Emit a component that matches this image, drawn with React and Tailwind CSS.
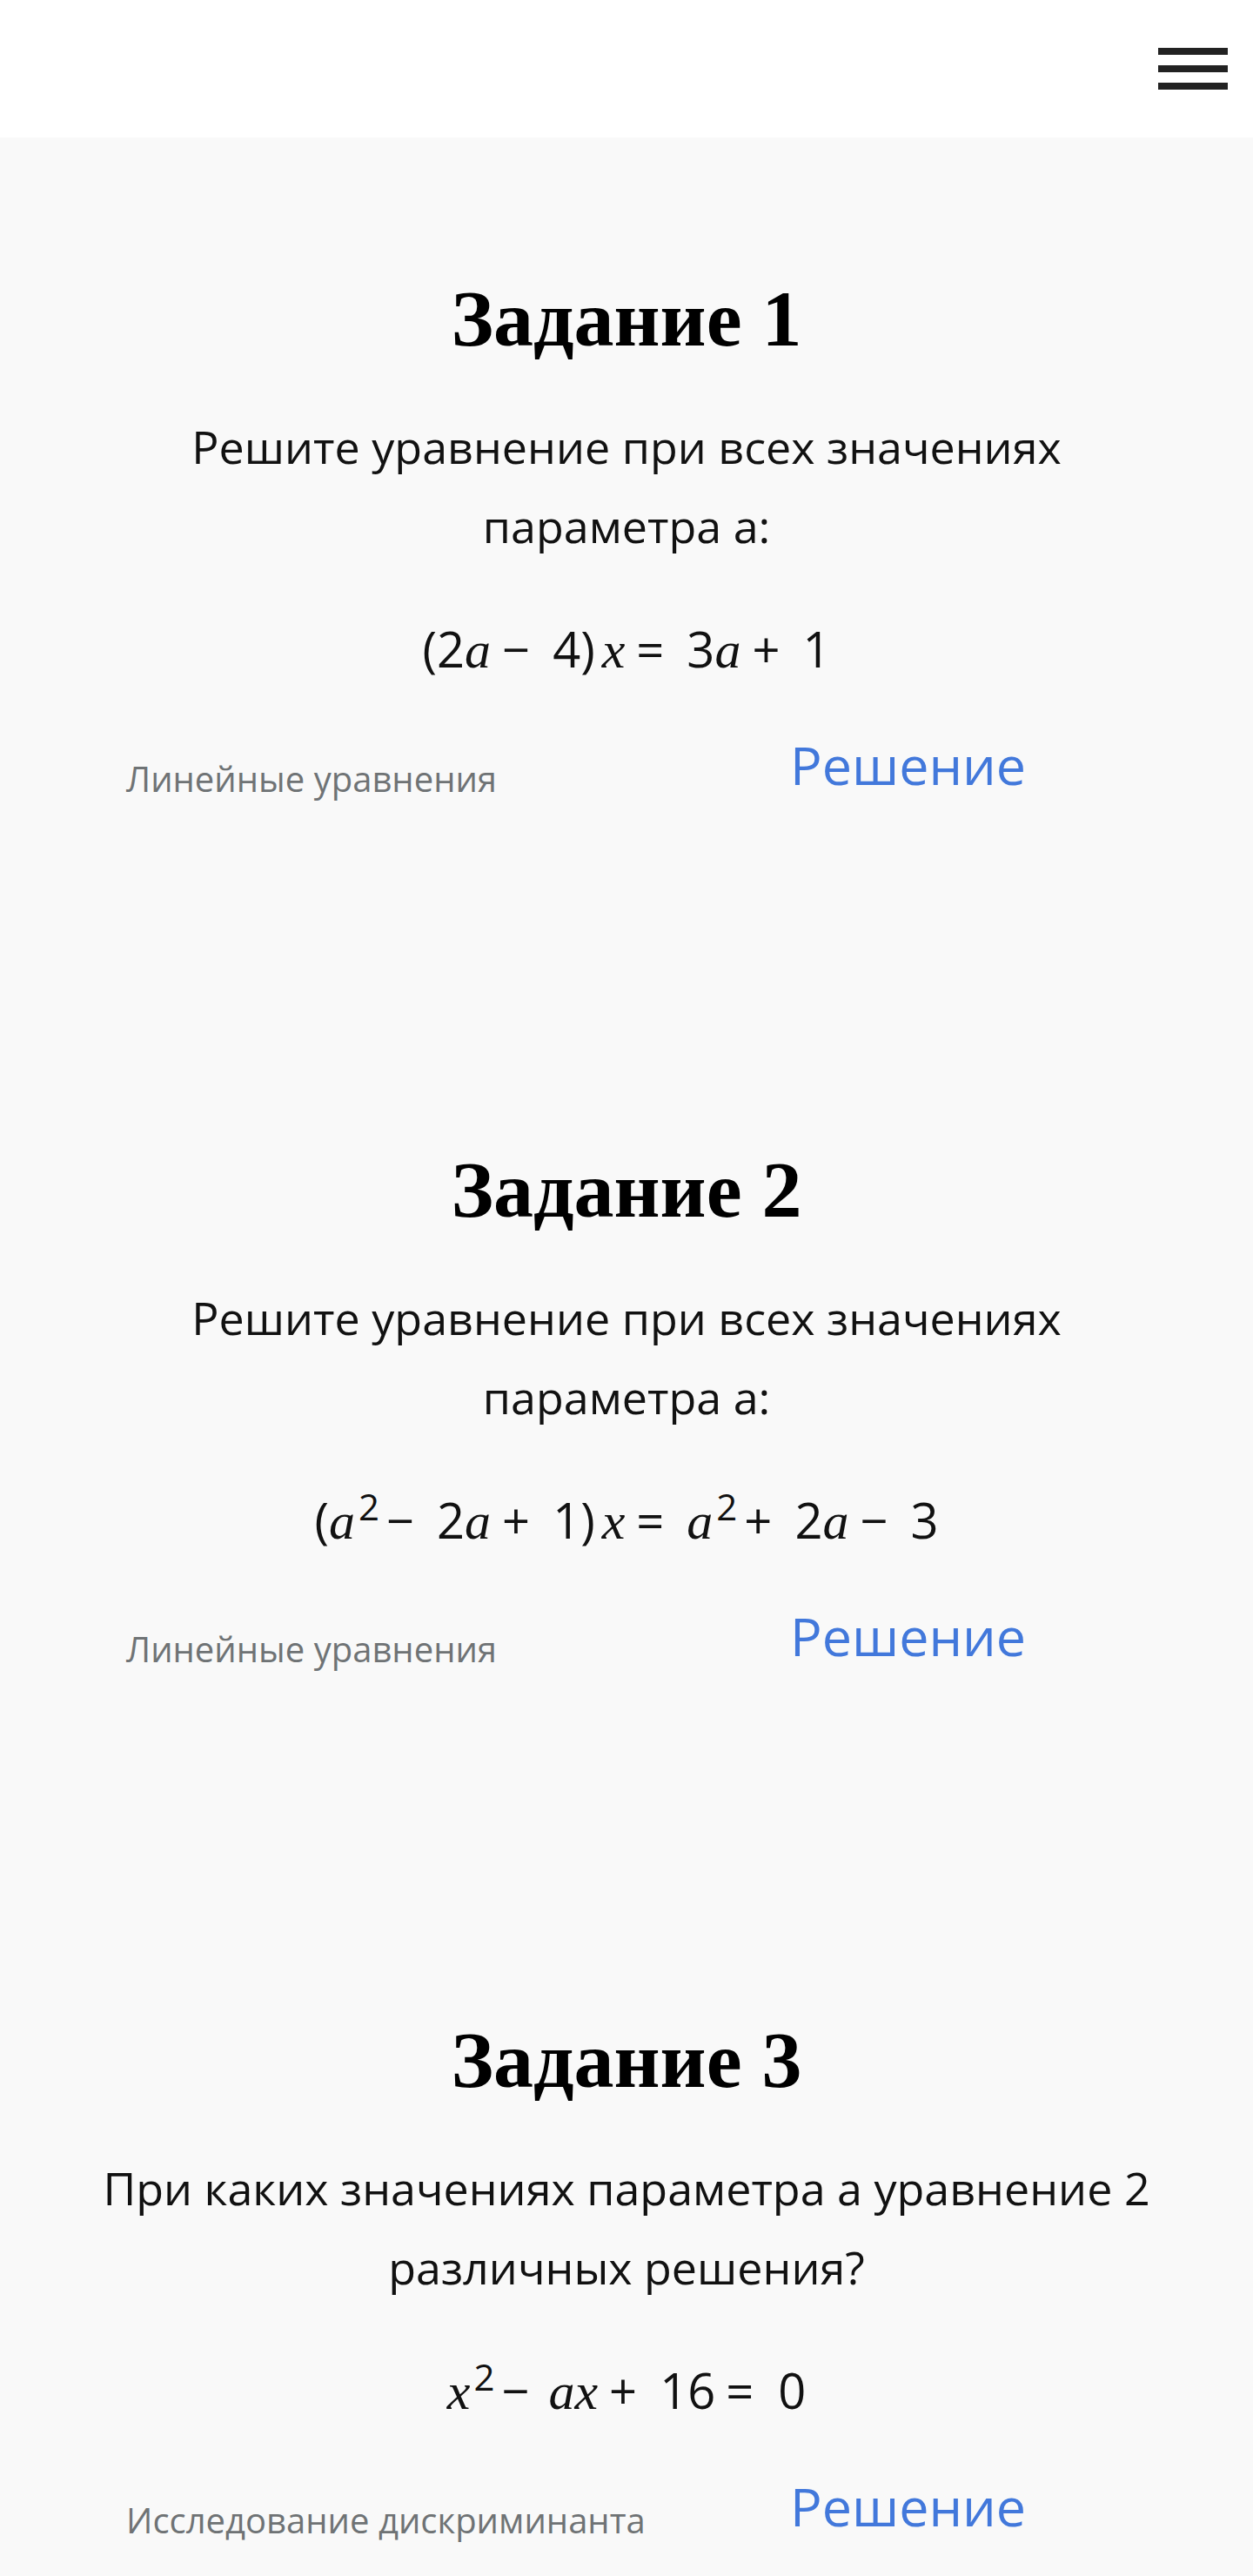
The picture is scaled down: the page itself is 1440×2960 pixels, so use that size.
import React from "react";

// variable in math italic
const V = ({ children }) => (
  <i className="font-['Liberation_Serif',serif] text-[60px] italic">{children}</i>
);

// operator with the wide space after it
const Op = ({ children }) => <span className="ml-[13px] mr-[26px]">{children}</span>;

const Eq1 = () => (
  <>
    (2<V>a</V>
    <Op>−</Op>
    4)<span className="ml-[8px]"><V>x</V></span>
    <Op>=</Op>
    3<V>a</V>
    <Op>+</Op>1
  </>
);

const Eq2 = () => (
  <>
    (<V>a</V>
    <sup className="ml-[4px]">2</sup>
    <span className="ml-[8px] mr-[26px]">−</span>
    2<V>a</V>
    <Op>+</Op>
    1)<span className="ml-[8px]"><V>x</V></span>
    <Op>=</Op>
    <V>a</V>
    <sup className="ml-[4px]">2</sup>
    <span className="ml-[8px] mr-[26px]">+</span>
    2<V>a</V>
    <Op>−</Op>3
  </>
);

const Eq3 = () => (
  <>
    <V>x</V>
    <sup className="ml-[4px]">2</sup>
    <span className="ml-[8px] mr-[22px]">−</span>
    <V>ax</V>
    <Op>+</Op>
    16
    <span className="ml-[12px] mr-[28px]">=</span>0
  </>
);

const tasks = [
  {
    n: 1,
    lines: ["Решите уравнение при всех значениях", "параметра а:"],
    eq: <Eq1 />,
    tag: "Линейные уравнения",
  },
  {
    n: 2,
    lines: ["Решите уравнение при всех значениях", "параметра а:"],
    eq: <Eq2 />,
    tag: "Линейные уравнения",
  },
  {
    n: 3,
    lines: ["При каких значениях параметра а уравнение 2", "различных решения?"],
    eq: <Eq3 />,
    tag: "Исследование дискриминанта",
  },
];

const Task = ({ task }) => (
  <section className="pt-[155px] pb-[234px]">
    <h2 className="text-center font-['Liberation_Serif',serif] text-[92px] font-bold leading-[106px] text-black">
      Задание {task.n}
    </h2>
    <p className="mt-[48px] text-center text-[52px] leading-[91px] text-[#111]">
      {task.lines[0]}
      <br />
      {task.lines[1]}
    </p>
    <div className="mt-[56px] text-center text-[56px] leading-[80px] text-[#111]">
      {task.eq}
    </div>
    <div className="mt-[46px] flex items-end pl-[145px]">
      <span className="w-[763px] text-[40px] text-[#6f7375]">{task.tag}</span>
      <a href="#" className="text-[61px] text-[#4278db]">
        Решение
      </a>
    </div>
  </section>
);

export default function App() {
  return (
    <div className="min-h-screen bg-[#f9f9f9] font-['Open_Sans',sans-serif]">
      <header className="flex h-[158px] items-center justify-end bg-white pr-[29px]">
        <button className="flex flex-col gap-[12px]">
          <span className="block h-[8px] w-[80px] bg-[#222]" />
          <span className="block h-[8px] w-[80px] bg-[#222]" />
          <span className="block h-[8px] w-[80px] bg-[#222]" />
        </button>
      </header>
      <main>
        {tasks.map((t) => (
          <Task key={t.n} task={t} />
        ))}
      </main>
    </div>
  );
}
